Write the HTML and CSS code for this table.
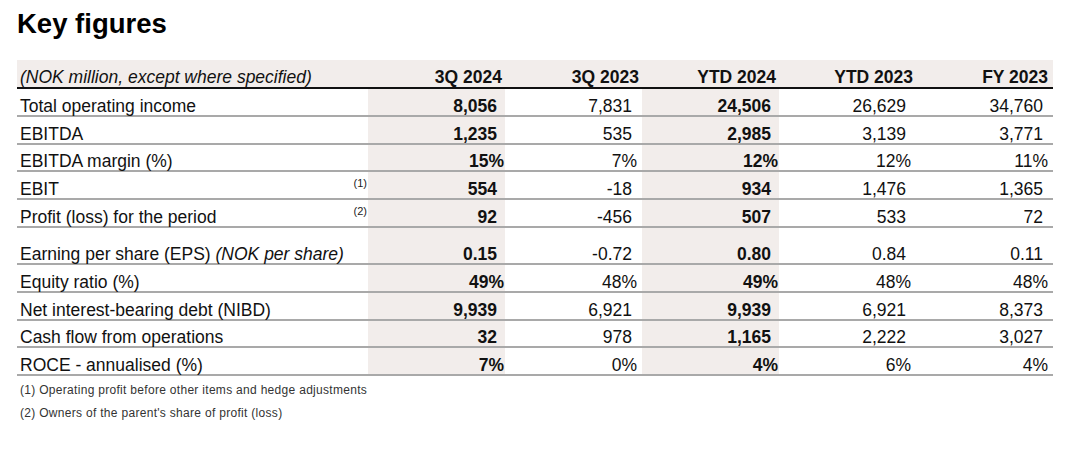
FILE: index.html
```html
<!DOCTYPE html>
<html lang="en">
<head>
<meta charset="utf-8">
<title>Key figures</title>
<link rel="stylesheet" href="styles.css">
</head>
<body>
<h1 class="title">Key figures</h1>
<table class="kf">
  <colgroup>
    <col class="c-label"><col class="c-note">
    <col class="c-num"><col class="c-num"><col class="c-num"><col class="c-num"><col class="c-num">
  </colgroup>
  <thead>
    <tr>
      <th class="unit" colspan="2">(NOK million, except where specified)</th>
      <th class="n">3Q 2024</th>
      <th class="n">3Q 2023</th>
      <th class="n">YTD 2024</th>
      <th class="n">YTD 2023</th>
      <th class="n last">FY 2023</th>
    </tr>
  </thead>
  <tbody>
    <tr>
      <td class="lbl">Total operating income</td><td class="note"></td>
      <td class="n hl b">8,056</td><td class="n">7,831</td><td class="n hl b">24,506</td><td class="n">26,629</td><td class="n">34,760</td>
    </tr>
    <tr>
      <td class="lbl">EBITDA</td><td class="note"></td>
      <td class="n hl b">1,235</td><td class="n">535</td><td class="n hl b">2,985</td><td class="n">3,139</td><td class="n">3,771</td>
    </tr>
    <tr>
      <td class="lbl">EBITDA margin (%)</td><td class="note"></td>
      <td class="n p hl b">15%</td><td class="n p">7%</td><td class="n p hl b">12%</td><td class="n p">12%</td><td class="n p">11%</td>
    </tr>
    <tr>
      <td class="lbl">EBIT</td><td class="note">(1)</td>
      <td class="n hl b">554</td><td class="n">-18</td><td class="n hl b">934</td><td class="n">1,476</td><td class="n">1,365</td>
    </tr>
    <tr>
      <td class="lbl">Profit (loss) for the period</td><td class="note">(2)</td>
      <td class="n hl b">92</td><td class="n">-456</td><td class="n hl b">507</td><td class="n">533</td><td class="n">72</td>
    </tr>
    <tr class="tall">
      <td class="lbl">Earning per share (EPS) <i>(NOK per share)</i></td><td class="note"></td>
      <td class="n hl b">0.15</td><td class="n">-0.72</td><td class="n hl b">0.80</td><td class="n">0.84</td><td class="n">0.11</td>
    </tr>
    <tr>
      <td class="lbl">Equity ratio (%)</td><td class="note"></td>
      <td class="n p hl b">49%</td><td class="n p">48%</td><td class="n p hl b">49%</td><td class="n p">48%</td><td class="n p">48%</td>
    </tr>
    <tr>
      <td class="lbl">Net interest-bearing debt (NIBD)</td><td class="note"></td>
      <td class="n hl b">9,939</td><td class="n">6,921</td><td class="n hl b">9,939</td><td class="n">6,921</td><td class="n">8,373</td>
    </tr>
    <tr>
      <td class="lbl">Cash flow from operations</td><td class="note"></td>
      <td class="n hl b">32</td><td class="n">978</td><td class="n hl b">1,165</td><td class="n">2,222</td><td class="n">3,027</td>
    </tr>
    <tr>
      <td class="lbl">ROCE - annualised (%)</td><td class="note"></td>
      <td class="n p hl b">7%</td><td class="n p">0%</td><td class="n p hl b">4%</td><td class="n p">6%</td><td class="n p">4%</td>
    </tr>
  </tbody>
</table>
<div class="footnotes">
  <p class="fn">(1) Operating profit before other items and hedge adjustments</p>
  <p class="fn">(2) Owners of the parent's share of profit (loss)</p>
</div>
</body>
</html>
```
FILE: styles.css
```css
html, body {
  margin: 0;
  padding: 0;
  background: #ffffff;
}

body {
  padding: 0 17px;
  font-family: "Liberation Sans", Arial, sans-serif;
  color: #111111;
}

.title {
  margin: 8px 0 20px 0;
  font-size: 27.5px;
  line-height: 32px;
  font-weight: bold;
  color: #000000;
}

.kf {
  border-collapse: collapse;
  table-layout: fixed;
  width: 1036px;
  font-size: 17.5px;
}

.c-label { width: 331px; }
.c-note { width: 20px; }
.c-num { width: 137px; }

.kf thead tr {
  background: #f2edeb;
  height: 28px;
}

.kf th {
  padding: 0 3px 0 3px;
  vertical-align: bottom;
  font-weight: bold;
  border-bottom: 2px solid #111111;
  line-height: 19px;
  white-space: nowrap;
}

.kf th.unit {
  text-align: left;
  font-style: italic;
  font-weight: normal;
}

.kf th.n {
  text-align: right;
}

.kf th.last {
  padding-right: 5px;
}

.kf tbody tr {
  height: 27.8px;
}

.kf tbody tr.tall {
  height: 37px;
}

.kf td {
  padding: 0 3px 0 3px;
  vertical-align: bottom;
  border-bottom: 2px solid #a9a9a9;
  line-height: 18px;
  white-space: nowrap;
}

.kf td.n {
  text-align: right;
  padding-right: 10px;
}

.kf td.n.hl {
  padding-right: 8px;
}

.kf td.p {
  padding-right: 5px;
}

.kf td.p.hl {
  padding-right: 1px;
}

.kf .hl {
  background: #f2edeb;
}

.kf .b {
  font-weight: bold;
}

.kf td.note {
  vertical-align: top;
  text-align: right;
  font-size: 11px;
  line-height: 12px;
  padding: 5px 1px 0 0;
  color: #222222;
}

.kf td.lbl i {
  font-style: italic;
}

.footnotes {
  margin-top: 3px;
  padding-left: 3px;
}

.fn {
  margin: 0;
  font-size: 12px;
  line-height: 23px;
  color: #333333;
  letter-spacing: 0.3px;
}
```
